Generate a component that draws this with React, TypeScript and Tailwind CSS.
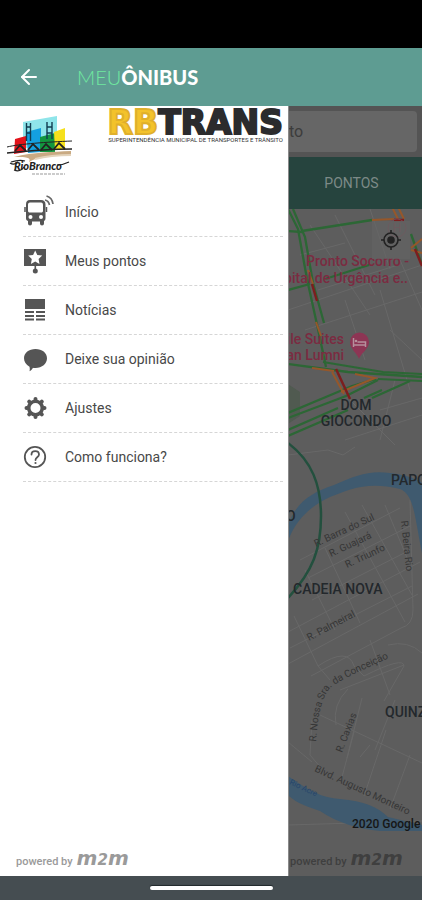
import type { ReactNode } from "react";
import { ArrowLeft } from "lucide-react";

type MenuItem = {
  label: string;
  icon: ReactNode;
};

const iconClass = "h-8 w-8 shrink-0 overflow-visible";

const BusIcon = () => (
  <svg className={iconClass} viewBox="0 0 32 32" fill="none" aria-hidden="true">
    <path
      fill="#555"
      fillRule="evenodd"
      d="M7 4h11c3 0 4.500 1.500 4.500 4.500V22c0 1.500-.5 2.500-1.500 3v2.500a2 2 0 0 1-4 0V25.500H9v2a2 2 0 0 1-4 0V25c-1.500-.5-2-1.500-2-3V8.500C3 5.500 4 4 7 4Zm0 2.500C5.500 6.500 5 7.500 5 9v5.500c0 1.500.5 2 2 2h11c1.500 0 2-.5 2-2V9c0-1.500-.5-2.500-2-2.500Z"
    />
    <circle cx="7.500" cy="21" r="2" fill="#fff" />
    <circle cx="18" cy="21" r="2" fill="#fff" />
    <path d="M2 11v5M23.500 11v5" stroke="#555" strokeWidth="1.500" />
    <path d="M22 4c2.500.5 4 2.500 4.500 5M23.500 0c3.500 1 6 4 6.500 8" stroke="#666" strokeWidth="1.700" />
  </svg>
);

const StopIcon = () => (
  <svg className={iconClass} viewBox="0 0 32 32" fill="#555" aria-hidden="true">
    <path d="M1 4h22v17H1z" />
    <path fill="#fff" d="m12.200 5.500 2.100 4.500 4.900.6-3.600 3.400.9 4.900-4.300-2.400-4.300 2.400.9-4.900-3.600-3.400 4.900-.6z" />
    <path d="M11.500 20h1.600v4h-1.600z" />
    <circle cx="12.300" cy="26" r="2.500" />
  </svg>
);

const NewsIcon = () => (
  <svg className={iconClass} viewBox="0 0 32 32" fill="#555" aria-hidden="true">
    <path d="M2 5h20v10H2zM2 17h9v2H2zM13 17h9v2h-9zM2 21h9v2H2zM13 21h9v2h-9zM2 24.500h9v2H2zM13 24.500h9v2h-9z" />
  </svg>
);

const OpinionIcon = () => (
  <svg className={iconClass} viewBox="0 0 32 32" fill="#555" aria-hidden="true">
    <path d="M12.500 6C19 6 24 9.800 24 15.200s-5 9.800-11.500 9.800c-1.200 0-1.800 0-2.500-.3-.5 1-1.500 2.500-3.500 3.500.5-1.500.3-3.200 0-4.500C3 21.500 1 18.800 1 15.200 1 9.800 6 6 12.500 6Z" />
  </svg>
);

const GearIcon = () => (
  <svg className={iconClass} viewBox="0 0 32 32" fill="none" stroke="#555" aria-hidden="true">
    <circle cx="12.500" cy="16" r="6.800" strokeWidth="3.600" />
    <g strokeWidth="4" strokeLinecap="round">
      <path d="M12.500 7V7.500M12.500 24.500V25M3.500 16H4M21 16h.5M6.200 9.700l.4.400M18.400 21.900l.4.400M6.200 22.300l.4-.4M18.400 10.100l.4-.4" />
    </g>
  </svg>
);

const HelpIcon = () => (
  <svg className={iconClass} viewBox="0 0 32 32" fill="none" stroke="#555" aria-hidden="true">
    <circle cx="12" cy="16" r="10.200" strokeWidth="1.800" />
    <path d="M8.500 13.500c0-4.500 7.500-4.500 7.500 0 0 2.700-3.500 2.800-3.500 5.500" strokeWidth="1.800" strokeLinecap="round" />
    <circle cx="12.500" cy="22" r="1.100" fill="#555" stroke="none" />
  </svg>
);

const menuItems: MenuItem[] = [
  { label: "Início", icon: <BusIcon /> },
  { label: "Meus pontos", icon: <StopIcon /> },
  { label: "Notícias", icon: <NewsIcon /> },
  { label: "Deixe sua opinião", icon: <OpinionIcon /> },
  { label: "Ajustes", icon: <GearIcon /> },
  { label: "Como funciona?", icon: <HelpIcon /> },
];

const CityLogo = () => (
  <svg className="h-[60px] w-[68px] shrink-0" viewBox="0 0 68 60" fill="none" aria-label="Prefeitura de Rio Branco">
    <path d="M16 6 50 0v32H16z" fill="#8fe5ea" />
    <path d="M8 23 19 20v16l-12 2z" fill="#e3131b" />
    <path d="M19 16l15-4v24l-13 1z" fill="#14a0e0" />
    <path d="M33 21l15-4v19H33z" fill="#12963f" />
    <path d="M47 16l11-4v22H48z" fill="#f5e01c" />
    <path d="M19.500 7v18M23.500 7v18M40 6v17M45 6v17" stroke="#123c50" strokeWidth="1.400" />
    <path d="M19 11h5M19 17h5M40 11h5M40 17h5" stroke="#123c50" strokeWidth="1.300" />
    <path d="M0 31c12-3 40-5 65-6" stroke="#222" strokeWidth="1" />
    <path d="M0 37c20-2 40-4 65-4" stroke="#222" strokeWidth="1.300" />
    <path d="m8 35 5-6 6 6M21 34l5-6 6 6M34 34l5-6 6 6M47 33l5-6 6 6" stroke="#222" strokeWidth="1.800" />
    <path d="M7 41c20-5 38-5 57-6v4c-20 0-34 2-42 7 2-4 0-5-15-5Z" fill="#c9aa83" />
    <path d="M28 43c12-3 24-4 36-4" stroke="#e3d3bb" strokeWidth="2" />
    <path d="M4 46c6-2 11-2 14-1M3 47c3 2 6 1 8-1" stroke="#222" strokeWidth="1.200" />
    <text x="7" y="54" fontSize="11" fontWeight="900" fontStyle="italic" fill="#222" fontFamily="Lato, sans-serif">
      RioBranco
    </text>
    <path d="M7 54c5 2 8 0 10-3M50 49c5 0 8-1 12-3" stroke="#222" strokeWidth="1.200" />
    <path d="M25 58h33" stroke="#999" strokeWidth="1" strokeDasharray="3 1" />
  </svg>
);

const PoweredBy = ({ dimmed = false }: { dimmed?: boolean }) => (
  <p className={`flex items-baseline gap-1 whitespace-nowrap text-[11px] leading-4 ${dimmed ? "text-[#3f3f3f]" : "text-[#9a9a9a]"}`}>
    <span className="font-medium">powered by</span>
    <span className="font-['DejaVu_Sans',sans-serif] text-[20px] font-bold italic leading-4">
      m<span className="text-[15px]">2</span>m
    </span>
  </p>
);

const CityMap = () => (
  <svg
    className="block w-full flex-1"
    viewBox="289 209 133 623"
    preserveAspectRatio="xMinYMin slice"
    fontFamily="Roboto, sans-serif"
    fill="none"
    role="img"
    aria-label="Mapa"
  >
    <path d="M288 209h134v623H288z" fill="#5d5d5d" />
    <path d="M288 384l12 8v24l-12 8z" fill="#505a50" />

    {/* minor streets */}
    <g stroke="#686868" strokeWidth="1">
      <path d="M310 225l60 90M335 215l40 80M288 310l134-45M305 330l117-38M380 290l30 100M345 300l20 60M400 260l22 50M370 209l20 60M300 255l45-12M318 290l80-25" />
      <path d="M350 400l45 45M380 410l42-12M390 330l32 30M395 380l-15 60M345 440l77-25M288 455l40-5 15 5 12-8" />
      <path d="M300 560l100-52M308 578l102-52M312 600l98-50M288 632l132-70M290 648l122-62M288 664l130-70M345 512l60 110M362 505l50 90M325 548l35 75M385 505l25 60M305 570l30 60M410 500l3 110q0 15-12 18l-90 48" />
      <path d="M294 616l24 50 12 14M318 666q30-20 36 0l10 10M364 676q40-20 40-10l-20 35M340 690l64-25M336 725q-4-20 12-36M362 698l-15 60M388 645q20-5 34 8M370 640l20 55" />
      <path d="M320 715l102 48M312 720l-2 35 12 14M354 732l-12 45M386 730l-22 66M410 755l-20 54M370 745l-10 12M288 742l24 20M288 825l134-4M395 700l-20 50" />
    </g>

    {/* river */}
    <path
      d="M288 525c8-22 22-32 46-40 22-10 36-15 56-12 16 2 25 5 32 10v70c-8-40-8-58-22-64-32-8-50 0-70 8-18 8-34 22-42 44z"
      fill="#3f5a6f"
    />
    <path d="M288 776c20 14 34 22 52 23 24 2 38 8 48 18l34 8v6h-42c-22-2-42-8-60-20-12-4-24-8-32-16z" fill="#3f5a6f" />

    {/* traffic */}
    <g stroke="#2c6735" strokeWidth="2.300">
      <path d="M288 209l10 20 9 50 11 50 8 38M293 209l12 28 8 46 11 40" />
      <path d="M302 231l70-11M288 231l14 1M288 290l22-6M325 279l44-14" />
      <path d="M411 234l10 28" />
      <path d="M288 364l60 8 74 5" />
      <path d="M323 362l60 10 39 2M378 379l44 2" strokeWidth="2" />
      <path d="M288 413l64-27 24-7M288 418l58-22 32-16M288 430l50-22M288 436l60-26M372 398l38-17M364 398l18-8" />
    </g>
    <g stroke="#96572a" strokeWidth="2">
      <path d="M372 220l22-1M392 207l7 14M398 207l6 12M411 248l11-9M411 250l11 3" />
      <path d="M308 270l5 14M316 322l5 14M312 368l22 3M332 372l12 22M355 374l20 4-34 14" />
    </g>
    <g stroke="#7c1e1e" strokeWidth="2.500">
      <path d="M312 284l5 17M415 249l7 17M336 369l14 30M394 220h10" />
    </g>
    <path d="M288 443c24 18 33 42 33 73 0 33-8 55-33 82" stroke="#23503e" strokeWidth="2.500" />

    {/* places */}
    <circle cx="397" cy="228" r="9" stroke="#7c4350" />
    <text x="397" y="232" fontSize="12" fill="#7c4350" textAnchor="middle">H</text>
    <g fill="#7b2b41" fontSize="14" fontWeight="500">
      <text x="306" y="266">Pronto Socorro -</text>
      <text x="408" y="283" textAnchor="end">pital de Urgência e..</text>
      <text x="344" y="344" textAnchor="end">ile Suites</text>
      <text x="344" y="360" textAnchor="end">an Lumni</text>
    </g>
    <path d="M359 359c-2-6-9-10-9-17a9.500 9.500 0 0 1 19 0c0 7-8 11-10 17Z" fill="#8d3554" />
    <path d="M353.500 338v9M353.500 345h12M365.500 347v-5h-8" stroke="#b5909c" strokeWidth="1.500" />
    <circle cx="356" cy="341" r="1.300" fill="#b5909c" />

    {/* neighbourhoods */}
    <g fill="#23282c" fontSize="14" fontWeight="500">
      <text x="356" y="410" textAnchor="middle">DOM</text>
      <text x="356" y="426" textAnchor="middle">GIOCONDO</text>
      <text x="391" y="485">PAPO</text>
      <text x="286" y="521">O</text>
      <text x="293" y="594">CADEIA NOVA</text>
      <text x="385" y="717">QUINZ</text>
    </g>

    {/* street names */}
    <path id="conceicao" d="M316 742c2-24 4-42 14-54 10-8 34-19 64-32" />
    <g fill="#363636" fontSize="10">
      <text transform="translate(316 547) rotate(-25)">R. Barra do Sul</text>
      <text transform="translate(331 557) rotate(-25)">R. Guajará</text>
      <text transform="translate(347 568) rotate(-25)">R. Triunfo</text>
      <text transform="translate(401 521) rotate(84)">R. Beira Rio</text>
      <text transform="translate(309 641) rotate(-28)">R. Palmeiral</text>
      <text transform="translate(342 753) rotate(-69)">R. Caxias</text>
      <text transform="translate(314 771) rotate(25)">Blvd. Augusto Monteiro</text>
      <text>
        <textPath href="#conceicao">R. Nossa Sra. da Conceição</textPath>
      </text>
    </g>
    <text transform="translate(289 784) rotate(25)" fontSize="8" fill="#27466b">Rio Acre</text>
    <text x="352" y="828" fontSize="12" fontWeight="500" fill="#161616">2020 Google</text>
  </svg>
);

const MapScreen = () => (
  <main className="flex min-w-0 flex-1 flex-col overflow-hidden border-l border-[#8a8a8a] bg-[#5d5d5d]">
    <div className="bg-[#545454] pt-[5px] pr-[5px] pb-[5px]">
      <input
        type="text"
        aria-label="Buscar ponto"
        placeholder="to"
        className="block h-[41px] w-full rounded-r bg-[#666] text-base text-[#333] outline-none placeholder:text-[#3c3c3c]"
      />
    </div>
    <button type="button" className="h-[52px] bg-[#26443e] pr-2 text-sm text-[#7d8a87]">
      PONTOS
    </button>
    <div className="relative flex flex-1 flex-col">
      <CityMap />
      <button
        type="button"
        aria-label="Minha localização"
        className="absolute top-3 right-3 flex h-[38px] w-[38px] items-center justify-center bg-[#646464]/70"
      >
        <svg className="h-5 w-5" viewBox="0 0 20 20" fill="none" stroke="#222" strokeWidth="1.600" aria-hidden="true">
          <circle cx="10" cy="10" r="7" />
          <circle cx="10" cy="10" r="3" fill="#222" />
          <path d="M10 0v3M10 17v3M0 10h3M17 10h3" />
        </svg>
      </button>
    </div>
    <div className="flex h-11 items-end pb-[6px] pl-px">
      <PoweredBy dimmed />
    </div>
  </main>
);

const Drawer = () => (
  <aside className="flex w-[288px] shrink-0 flex-col bg-white">
    <div className="flex h-[82px] items-start justify-between pt-1 pr-[5px] pl-[7px]">
      <div className="pt-[6px]">
        <CityLogo />
      </div>
      <div className="flex flex-col items-end whitespace-nowrap font-['DejaVu_Sans',sans-serif]">
        <p className="text-[33px] font-bold leading-[26px] text-[#2b2b2d] [-webkit-text-stroke:2px_#2b2b2d]">
          <span className="text-[#f3c22b] [-webkit-text-stroke:2px_#e0b02c]">RB</span>TRANS
        </p>
        <p className="font-['Roboto',sans-serif] text-[6px] leading-2 text-[#333]">
          SUPERINTENDÊNCIA MUNICIPAL DE TRANSPORTES E TRÂNSITO
        </p>
      </div>
    </div>
    <nav className="pr-[5px] pl-[23px]">
      <ul>
        {menuItems.map((item) => (
          <li key={item.label} className="border-b border-dashed border-[#d6d6d6]">
            <button type="button" className="flex h-12 w-full items-center gap-[10px] text-left text-sm text-[#484848]">
              {item.icon}
              {item.label}
            </button>
          </li>
        ))}
      </ul>
    </nav>
    <div className="mt-auto pb-[6px] pl-4">
      <PoweredBy />
    </div>
  </aside>
);

export default function App() {
  return (
    <div className="flex min-h-screen flex-col bg-black font-['Roboto',sans-serif]">
      <div className="h-12 bg-black" />
      <header className="flex h-[58px] items-center bg-[#5e9c92] pl-[17px]">
        <button type="button" aria-label="Voltar" className="text-white">
          <ArrowLeft className="h-6 w-6" strokeWidth={2} />
        </button>
        <h1 className="ml-9 font-['Lato',sans-serif] text-[20px] font-black leading-6 text-white">
          <span className="font-light text-[#6fe8a0]">MEU</span>ÔNIBUS
        </h1>
      </header>
      <div className="flex flex-1">
        <Drawer />
        <MapScreen />
      </div>
      <footer className="flex h-6 items-center justify-center bg-[#454d51]">
        <div className="h-1 w-[123px] rounded-full bg-white shadow-[0_-1px_1px_#20282b]" />
      </footer>
    </div>
  );
}
